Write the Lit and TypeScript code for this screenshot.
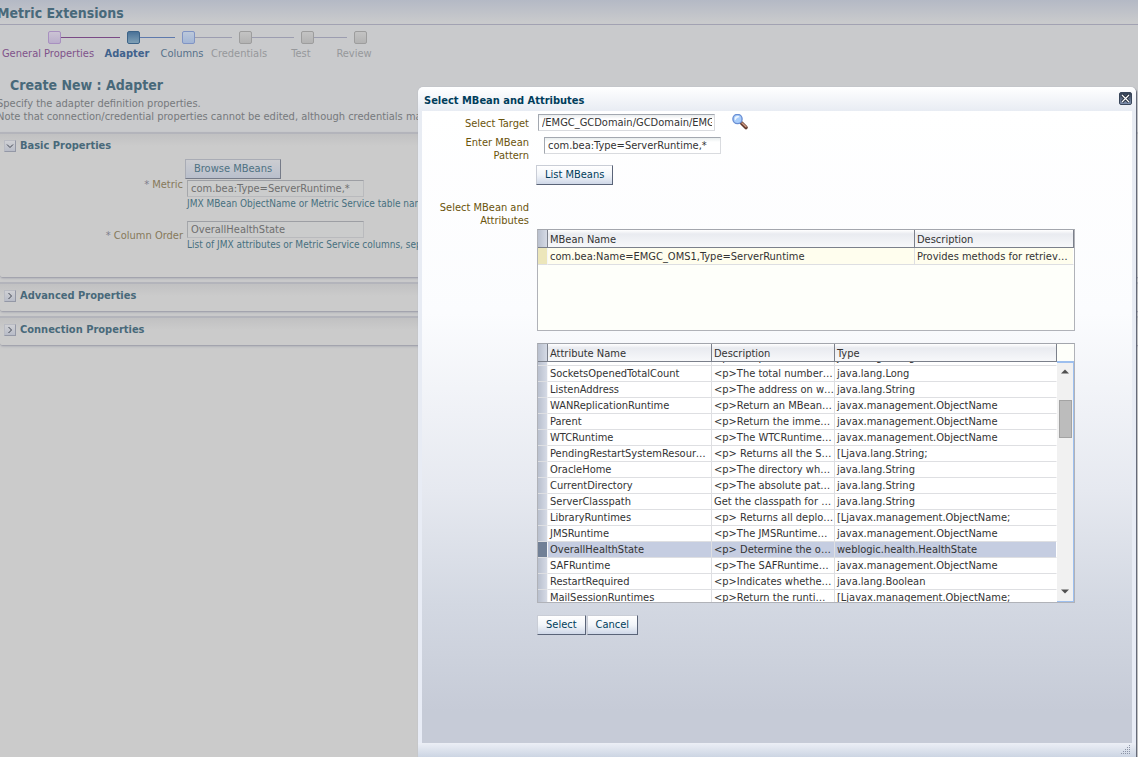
import { LitElement, html, css, svg } from "lit";
import { customElement } from "lit/decorators.js";
import { classMap } from "lit/directives/class-map.js";

const STEPS = [
  { label: "General Properties", kind: "visited" },
  { label: "Adapter", kind: "current" },
  { label: "Columns", kind: "next" },
  { label: "Credentials", kind: "off" },
  { label: "Test", kind: "off" },
  { label: "Review", kind: "off" },
];

const ATTRIBUTES: [string, string, string][] = [
  ["Name", "<p>The path to the server", "java.lang.String"],
  ["SocketsOpenedTotalCount", "<p>The total number of sockets", "java.lang.Long"],
  ["ListenAddress", "<p>The address on which", "java.lang.String"],
  ["WANReplicationRuntime", "<p>Return an MBean which", "javax.management.ObjectName"],
  ["Parent", "<p>Return the immediate parent", "javax.management.ObjectName"],
  ["WTCRuntime", "<p>The WTCRuntimeMBean", "javax.management.ObjectName"],
  ["PendingRestartSystemResources", "<p> Returns all the System", "[Ljava.lang.String;"],
  ["OracleHome", "<p>The directory where", "java.lang.String"],
  ["CurrentDirectory", "<p>The absolute path of", "java.lang.String"],
  ["ServerClasspath", "Get the classpath for this", "java.lang.String"],
  ["LibraryRuntimes", "<p> Returns all deployed", "[Ljavax.management.ObjectName;"],
  ["JMSRuntime", "<p>The JMSRuntimeMBean", "javax.management.ObjectName"],
  ["OverallHealthState", "<p> Determine the overall", "weblogic.health.HealthState"],
  ["SAFRuntime", "<p>The SAFRuntimeMBean", "javax.management.ObjectName"],
  ["RestartRequired", "<p>Indicates whether the", "java.lang.Boolean"],
  ["MailSessionRuntimes", "<p>Return the runtime mail", "[Ljavax.management.ObjectName;"],
];

const base = css`
  * { box-sizing: border-box; }
  button, input { font: inherit; margin: 0; border-radius: 0; }
  .btn {
    height: 20px;
    padding: 0 8px 1px;
    color: #003d5b;
    background: linear-gradient(#ffffff, #f2f5f9 50%, #cfd8e8);
    border: 1px solid #c9cdd6;
    border-right: 1px solid #5a6478;
    border-bottom: 1px solid #5a6478;
  }
  .field {
    display: block;
    width: 177px;
    height: 17px;
    padding: 0 2px 0 3px;
    color: #333333;
    background: linear-gradient(#e9edee, #ffffff 4px);
    border: 1px solid #d9dbdf;
    border-top-color: #a3a8b0;
    border-left-color: #a3a8b0;
    outline: none;
  }
`;

@customElement("metric-page")
export class MetricPage extends LitElement {
  static styles = [
    base,
    css`
      :host {
        display: block;
        height: 100%;
        overflow: hidden;
        color: #76797c;
        background: linear-gradient(#b4b9c5, #c9cacc 22px, #c9cacc 132px, #cbcbcb 132px);
      }
      h1, h2, h3, p, ol { margin: 0; padding: 0; font-weight: normal; }
      h1 {
        height: 25px;
        margin-left: -3px;
        font-size: 14px;
        line-height: 26px;
        font-weight: bold;
        color: #48697a;
        border-bottom: 1px solid #a2a2b2;
      }
      .train {
        display: grid;
        grid-template-columns: 79px 55px 57px 62px 53px 20px;
        padding: 6px 0 0 41px;
        list-style: none;
      }
      .track { display: flex; align-items: center; padding-left: 7px; }
      .box {
        width: 13px;
        height: 13px;
        border: 1px solid #9d9d9d;
        border-radius: 2px;
        background: linear-gradient(#c3c3c3, #b3b3b3);
      }
      .line { flex: 1; height: 1px; background: #9c9db0; }
      .step:last-child .line { display: none; }
      .caption {
        display: flex;
        justify-content: center;
        width: 14px;
        line-height: 20px;
        white-space: nowrap;
        color: #96989b;
      }
      .visited .box { border-color: #a890c0; background: linear-gradient(#cbc3d4, #baaecb); }
      .visited .line { background: #7b4a86; }
      .visited .caption { color: #80528a; }
      .current .box { border-color: #3d6488; background: linear-gradient(#4a7298, #7fa0b6); }
      .current .line { background: #5e79ac; }
      .current .caption { color: #40628c; font-weight: bold; }
      .next .box { border-color: #8094c4; background: linear-gradient(#bcc8da, #a3b6d6); }
      .next .caption { color: #56708a; }
      h2 {
        padding: 10px 0 0 10px;
        font-size: 14px;
        line-height: 23px;
        font-weight: bold;
        color: #48697a;
      }
      .intro {
        margin-left: -3px;
        padding: 0 0 9px;
        line-height: 13px;
        white-space: nowrap;
      }
      .section {
        margin-bottom: 4px;
        border-top: 2px solid #b3b4bb;
        border-bottom: 1px solid #a3a4ae;
        border-bottom-left-radius: 3px;
        background: linear-gradient(#c1c1c2, #cbcbcb 12px);
        box-shadow: 0 1px 2px #b4b5bb;
      }
      .section-head {
        display: flex;
        align-items: center;
        gap: 4px;
        height: 27px;
        padding: 0 0 3px 4px;
      }
      .toggle {
        display: flex;
        width: 12px;
        height: 12px;
        padding: 0;
        border: 1px solid #b9bbc3;
        border-right-color: #9498a6;
        border-bottom-color: #9498a6;
        background: linear-gradient(#cfd0d4, #b8bcc8);
      }
      h3 { font-size: 11px; line-height: 14px; font-weight: bold; color: #48697a; }
      .content {
        display: grid;
        grid-template-columns: 183px 1fr;
        column-gap: 4px;
        height: 118px;
        margin-top: -2px;
        align-content: start;
        white-space: nowrap;
      }
      .label { text-align: right; line-height: 14px; color: #86795a; }
      .metric-label { padding-top: 19px; }
      .order-label { padding-top: 8px; }
      .star { color: #7d7d8c; }
      .value { min-width: 0; }
      .hint { font-size: 10px; line-height: 13px; color: #47707f; }
      .metric { padding-bottom: 11px; }
      .btn {
        display: block;
        margin-left: -2px;
        margin-bottom: 1px;
        color: #4f7283;
        border-color: #a9acb5;
        border-right-color: #767b88;
        border-bottom-color: #767b88;
        background: linear-gradient(#cccdd1, #b9bfcc);
      }
      .field {
        color: #6f6f6f;
        background: #cbcccc;
        border-color: #b9babd;
        border-top-color: #9d9fa4;
        border-left-color: #a5a7ab;
      }
    `,
  ];

  private toggle(open: boolean, name: string) {
    const d = open ? "M2 3.500l3 3 3-3" : "M3.500 2l3 3-3 3";
    return html`<button class="toggle" aria-label=${name} aria-expanded=${open}>
      <svg width="10" height="10" viewBox="0 0 10 10" fill="none" stroke="#3f4450">${svg`<path d=${d} />`}</svg>
    </button>`;
  }

  render() {
    return html`
      <h1>Metric Extensions</h1>
      <ol class="train">
        ${STEPS.map(
          (s) => html`<li class="step ${s.kind}">
            <div class="track"><span class="box"></span><span class="line"></span></div>
            <div class="caption">${s.label}</div>
          </li>`
        )}
      </ol>
      <h2>Create New : Adapter</h2>
      <div class="intro">
        <p>Specify the adapter definition properties.</p>
        <p>Note that connection/credential properties cannot be edited, although credentials may be</p>
      </div>
      <section class="section">
        <div class="section-head">${this.toggle(true, "Basic Properties")}<h3>Basic Properties</h3></div>
        <div class="content">
          <label class="label metric-label" for="metric"><span class="star">*</span> Metric</label>
          <div class="value metric">
            <button class="btn">Browse MBeans</button>
            <input class="field" id="metric" .value=${"com.bea:Type=ServerRuntime,*"} />
            <p class="hint">JMX MBean ObjectName or Metric Service table name</p>
          </div>
          <label class="label order-label" for="order"><span class="star">*</span> Column Order</label>
          <div class="value">
            <input class="field" id="order" .value=${"OverallHealthState"} />
            <p class="hint">List of JMX attributes or Metric Service columns, separated</p>
          </div>
        </div>
      </section>
      <section class="section">
        <div class="section-head">${this.toggle(false, "Advanced Properties")}<h3>Advanced Properties</h3></div>
      </section>
      <section class="section">
        <div class="section-head">${this.toggle(false, "Connection Properties")}<h3>Connection Properties</h3></div>
      </section>
    `;
  }
}

@customElement("mbean-dialog")
export class MbeanDialog extends LitElement {
  static styles = [
    base,
    css`
      :host {
        box-sizing: border-box;
        display: flex;
        flex-direction: column;
        padding: 0 4px;
        border-radius: 5px 5px 0 0;
        background: linear-gradient(#ffffff, #e8ecf3 24px, #e8ecf6);
        box-shadow: 0 0 1px #9aa1b4, 1px 1px 1px #55596a;
        color: #333333;
      }
      .head { display: flex; justify-content: space-between; height: 24px; padding-left: 2px; }
      h2 { margin: 0; font-size: 11px; line-height: 27px; font-weight: bold; color: #003d5b; }
      .close {
        display: flex;
        width: 13px;
        height: 13px;
        margin-top: 5px;
        padding: 0;
        border: 1px solid #39465a;
        border-radius: 2px;
        background: linear-gradient(#333f52, #8091ae);
      }
      .main {
        flex: 1;
        min-height: 0;
        overflow: hidden;
        padding-top: 3px;
        background: linear-gradient(#ffffff, #fbfcfe 32%, #e6e9f0 60%, #d3d8e2 78%, #c6cbd7 95%);
      }
      .form {
        display: grid;
        grid-template-columns: 107px minmax(0, 1fr);
        column-gap: 8px;
      }
      .label { text-align: right; line-height: 13px; color: #6b540c; }
      .label-target { padding-top: 3px; }
      .label-table { padding-top: 9px; }
      .target { display: flex; gap: 16px; height: 22px; padding-left: 1px; }
      .search { display: flex; width: 20px; height: 18px; padding: 0; border: 0; background: none; }
      .pattern { height: 29px; padding: 1px 0 0 7px; }
      .list { height: 27px; }
      .list .btn { display: block; margin-left: -1px; }
      .tables { display: flex; flex-direction: column; gap: 12px; padding-top: 37px; }
      .actions { display: flex; gap: 1px; }
      .frame {
        display: grid;
        grid-template-columns: minmax(0, 1fr) auto;
        width: 538px;
        max-width: 100%;
        border: 1px solid #b0b2b8;
        border-top-color: #a3a6ad;
        background: #fefffa;
      }
      .beans { height: 102px; align-items: start; }
      .attrs { height: 260px; }
      .scroller { height: 258px; overflow: hidden; background: #ffffff; }
      table { width: 100%; table-layout: fixed; border-collapse: separate; border-spacing: 0; }
      th, td {
        overflow: hidden;
        text-overflow: ellipsis;
        white-space: nowrap;
        text-align: left;
        font-weight: normal;
      }
      thead th {
        position: sticky;
        top: 0;
        z-index: 1;
        height: 18px;
        padding: 2px 0 0 2px;
        line-height: 14px;
        background: linear-gradient(#ffffff, #e9ebf0 4px, #f7f8fa);
        border-right: 1px solid #7b808b;
        border-bottom: 1px solid #7b808b;
      }
      tbody td {
        height: 16px;
        padding: 1px 0 0 2px;
        line-height: 14px;
        border-right: 1px solid #dedfe2;
        border-bottom: 1px solid #dedfe2;
      }
      thead .grip, tbody .grip {
        padding: 0;
        border-right-color: #f4f5f7;
        background: linear-gradient(90deg, #b9c0ce, #d5dae5);
      }
      thead .grip { border-right-color: #7b808b; }
      tbody td:last-child { border-right-color: #ffffff; }
      .beans tbody td { height: 17px; line-height: 15px; background: #fffeee; }
      .beans tbody td:last-child { padding-right: 4px; }
      .beans tbody .grip { background: #ece6ba; }
      .chosen td { background: #c5cde1; }
      tbody .chosen .grip { background: #718096; }
      .w-grip { width: 10px; }
      .w-bean { width: 367px; }
      .w-name { width: 164px; }
      .w-desc { width: 123px; }
      .scroll {
        display: flex;
        flex-direction: column;
        width: 17px;
        margin-top: 17px;
        align-items: center;
        background: #f1f1f1;
        border: 1px solid #9dbfee;
        border-left: 0;
        border-top: 2px solid #9dbfee;
      }
      .arrow {
        display: flex;
        justify-content: center;
        width: 16px;
        height: 18px;
        padding: 6px 0 0;
        border: 0;
        background: none;
      }
      .lane { flex: 1; padding-top: 19px; }
      .thumb { width: 13px; height: 38px; background: #bcbcbc; border: 1px solid #a3a3a3; }
      .foot {
        display: flex;
        justify-content: flex-end;
        align-items: flex-end;
        height: 14px;
        margin: 0 -4px;
        padding: 0 5px 2px;
        background: linear-gradient(#eceff6, #ccd5e3);
      }
    `,
  ];

  // Opens the list part of the way through its first row.
  firstUpdated() {
    this.renderRoot.querySelector(".scroller")!.scrollTop = 12;
  }

  render() {
    const dots: [number, number][] = [];
    for (let r = 0; r < 5; r++) for (let c = 4 - r; c < 5; c++) dots.push([c * 2, r * 2]);
    return html`
      <div class="head">
        <h2>Select MBean and Attributes</h2>
        <button class="close" aria-label="Close">
          <svg width="11" height="11" viewBox="0 0 11 11" fill="none">
            <path d="M2 2l7 7M9 2l-7 7" stroke="#1b2330" stroke-width="3" />
            <path d="M2 2l7 7M9 2l-7 7" stroke="#ffffff" stroke-width="1.2" />
          </svg>
        </button>
      </div>
      <div class="main">
        <div class="form">
          <label class="label label-target" for="target">Select Target</label>
          <div class="target">
            <input class="field" id="target" .value=${"/EMGC_GCDomain/GCDomain/EMGC_ADMINSERVER"} />
            <button class="search" aria-label="Search">
              <svg width="20" height="18" viewBox="0 0 20 18" fill="none">
                <path d="M10.500 9l4.500 4.500" stroke="#5e382c" stroke-width="3.600" stroke-linecap="round" />
                <path d="M11 9l4 3.800" stroke="#d09b85" stroke-width="1.500" stroke-linecap="round" />
                <circle cx="6.500" cy="5" r="4.600" fill="#a9cdfa" stroke="#6a8fd4" stroke-width="1.400" />
                <path d="M3.600 5a3 3 0 0 1 3-3c1.500 0 2 .7 1.800 1.200-2 .3-3.300 1.300-3.800 3-.7 0-1-.6-1-1.200z" fill="#eef6ff" />
              </svg>
            </button>
          </div>
          <label class="label" for="pattern">Enter MBean<br />Pattern</label>
          <div class="pattern">
            <input class="field" id="pattern" .value=${"com.bea:Type=ServerRuntime,*"} />
          </div>
          <span></span>
          <div class="list"><button class="btn">List MBeans</button></div>
          <div class="label label-table">Select MBean and<br />Attributes</div>
          <div class="tables">
            <div class="frame beans">
              <table aria-label="MBeans">
                <thead>
                  <tr>
                    <th class="grip w-grip"></th>
                    <th class="w-bean">MBean Name</th>
                    <th>Description</th>
                  </tr>
                </thead>
                <tbody>
                  <tr>
                    <td class="grip"></td>
                    <td>com.bea:Name=EMGC_OMS1,Type=ServerRuntime</td>
                    <td>Provides methods for retrieving runtime</td>
                  </tr>
                </tbody>
              </table>
            </div>
            <div class="frame attrs">
              <div class="scroller">
                <table aria-label="Attributes">
                  <thead>
                    <tr>
                      <th class="grip w-grip"></th>
                      <th class="w-name">Attribute Name</th>
                      <th class="w-desc">Description</th>
                      <th>Type</th>
                    </tr>
                  </thead>
                  <tbody>
                    ${ATTRIBUTES.map(
                      ([name, desc, type]) => html`<tr class=${classMap({ chosen: name === "OverallHealthState" })}>
                        <td class="grip"></td>
                        <td>${name}</td>
                        <td>${desc}</td>
                        <td>${type}</td>
                      </tr>`
                    )}
                  </tbody>
                </table>
              </div>
              <div class="scroll">
                <button class="arrow" aria-label="Scroll up">
                  <svg width="8" height="5" viewBox="0 0 8 5"><path d="M0 4.500L4 .5l4 4z" fill="#505050" /></svg>
                </button>
                <div class="lane"><div class="thumb"></div></div>
                <button class="arrow" aria-label="Scroll down">
                  <svg width="8" height="5" viewBox="0 0 8 5"><path d="M0 .5l4 4 4-4z" fill="#505050" /></svg>
                </button>
              </div>
            </div>
            <div class="actions">
              <button class="btn">Select</button>
              <button class="btn">Cancel</button>
            </div>
          </div>
        </div>
      </div>
      <div class="foot">
        <svg width="10" height="10" viewBox="0 0 10 10" fill="#8b93a5">
          ${dots.map(([x, y]) => svg`<rect x=${x} y=${y} width="1" height="1" />`)}
        </svg>
      </div>
    `;
  }
}

@customElement("app-root")
export class AppRoot extends LitElement {
  static styles = css`
    :host {
      display: block;
      position: relative;
      height: 100vh;
      overflow: hidden;
      font-family: "DejaVu Sans Condensed", "DejaVu Sans", sans-serif;
      font-size: 11px;
      line-height: 14px;
    }
    .dialog {
      position: absolute;
      top: 87px;
      right: 2px;
      bottom: 0;
      left: 418px;
    }
  `;

  render() {
    return html`
      <metric-page></metric-page>
      <mbean-dialog class="dialog" role="dialog" aria-label="Select MBean and Attributes"></mbean-dialog>
    `;
  }
}
